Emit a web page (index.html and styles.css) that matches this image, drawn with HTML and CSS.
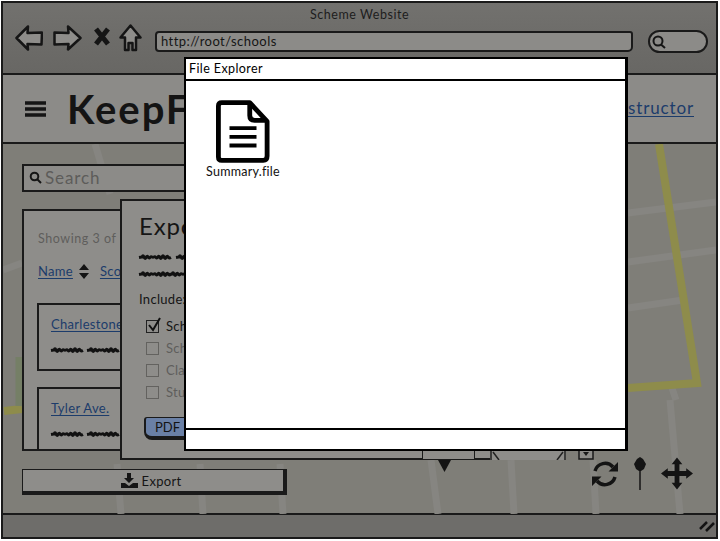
FILE: index.html
```html
<!DOCTYPE html>
<html lang="en">
<head>
<meta charset="utf-8">
<title>Scheme Website</title>
<link rel="stylesheet" href="styles.css">
</head>
<body>
<svg class="defs" width="0" height="0" aria-hidden="true">
  <defs>
    <path id="w" d="M0 4.500 3 4q1-2.500 2 0t2 .5t2-.5t2 .5t2-.5t2 0t2 .5t2-.5t2 .5t2-.5t2 0t2 .5t2-.5 3 .5"/>
    <path id="s" d="M0 4.500 3 4q1-2.500 2 0t2 .5 2-.5"/>
  </defs>
</svg>
<div class="window">
  <div class="chrome">
    <div class="site-title">Scheme Website</div>
    <div class="toolbar">
      <svg class="nav-icon" width="28" height="26" viewBox="0 0 28 26"><path d="M27 7.500 12.500 8 13 1.500 1.500 13 13 24.500 12.500 19 26.500 19.500z"/></svg>
      <svg class="nav-icon" width="29" height="26" viewBox="0 0 29 26"><path d="M1.500 7.500 15.500 8 15 1.500 27.500 13 15 24.500 15.500 19 1.500 19.500z"/></svg>
      <svg class="x-icon" width="18" height="19" viewBox="0 0 18 19"><path d="M3 2 15 17M15 2 3 17"/></svg>
      <svg class="nav-icon home" width="23" height="28" viewBox="0 0 23 28"><path d="M11.500 1.500 21.500 13.500 17 13.500 17 26 13.500 26 13.500 19 9.500 19 9.500 26 6 26 6 13.500 1.500 13.500z"/></svg>
      <div class="url">http://root/schools</div>
      <div class="oval">
        <svg width="16" height="16" viewBox="0 0 16 16"><circle cx="7" cy="7" r="4.500"/><path d="M10 10.500 14 14"/></svg>
      </div>
    </div>
  </div>
  <div class="appbar">
    <div class="brand">
      <svg class="burger" width="21" height="16" viewBox="0 0 21 16"><path d="M0 2h21M0 8h21M0 14h21"/></svg>
      <div class="logo">KeepF</div>
    </div>
    <a class="link instructor">Instructor</a>
  </div>
  <div class="map">
    <svg class="roads" width="716" height="370" viewBox="0 0 716 370">
      <path class="road" d="M0 126 19 119M92 0 107 50M625 69 713 58M625 118 713 106M625 164 680 156M114 320 118 370M197 320 200 370M277 320 280 370M428 316 435 370M508 316 511 370M590 316 593 370M667 256 677 370M669 244 673 256"/>
      <path class="road-y" d="M656 0 694 239 625 244M1 267 19 265"/>
      <path class="green" d="M16 213 16 262"/>
    </svg>

    <div class="searchbox">
      <svg width="13" height="13" viewBox="0 0 13 13"><circle cx="5.500" cy="5.500" r="3.800"/><path d="M8.500 8.500 12 12"/></svg>
      <span>Search</span>
    </div>

    <div class="list-panel">
      <div class="showing">Showing 3 of 3</div>
      <div class="sorts">
        <a class="link">Name</a>
        <svg class="sort" width="10" height="15" viewBox="0 0 10 15"><path d="M5 0 10 6H0zM5 15 0 9H10z"/></svg>
        <a class="link">Score</a>
      </div>
      <div class="card">
        <a class="link">Charlestone</a>
        <svg class="scribble" width="90" height="8" viewBox="0 0 90 8"><use href="#w"/><use href="#w" transform="translate(36 0)"/></svg>
      </div>
      <div class="card">
        <a class="link">Tyler Ave.</a>
        <svg class="scribble" width="90" height="8" viewBox="0 0 90 8"><use href="#w"/><use href="#w" transform="translate(36 0)"/></svg>
      </div>
    </div>

    <div class="export-panel">
      <div class="export-title">Export</div>
      <svg class="scribble" width="60" height="8" viewBox="0 0 60 8"><use href="#w"/><use href="#s" transform="translate(37 0)"/></svg>
      <svg class="scribble" width="60" height="8" viewBox="0 0 60 8"><use href="#w"/><use href="#w" transform="translate(30 0)"/></svg>
      <div class="include">Include:</div>
      <div class="checks">
        <div class="check on"><i class="box"><svg width="16" height="16" viewBox="0 0 16 16"><path d="M3 8 7 13 14 1"/></svg></i>School</div>
        <div class="check"><i class="box"></i>School</div>
        <div class="check"><i class="box"></i>Class</div>
        <div class="check"><i class="box"></i>Student</div>
      </div>
      <div class="pdf">PDF</div>
    </div>

    <div class="behind-bar"></div>
    <svg class="behind-tri" width="13" height="12" viewBox="0 0 13 12"><path d="M0 0H13L6.500 12z"/></svg>
    <svg class="behind-img" width="76" height="9" viewBox="0 0 76 9"><path class="fill" d="M0 0H76V9H0z"/><path d="M1 0V9M75 0V9M3 1 9 9M73 1 67 9"/></svg>
    <svg class="behind-chk" width="16" height="9" viewBox="0 0 16 9"><path d="M1 0V8H15V0"/><path class="solid" d="M5 1H11L8 5z"/></svg>

    <div class="export-btn">
      <svg width="17" height="15" viewBox="0 0 17 15"><path d="M6 0h4v5h3L8 10 3 5h3zM0 10h4l4 3 4-3h5v5H0z"/></svg>
      <span>Export</span>
    </div>

    <div class="map-tools">
      <svg class="refresh" width="28" height="28" viewBox="0 0 28 28"><path class="arc" d="M4 11A10.500 10.500 0 0 1 22 7M24 17A10.500 10.500 0 0 1 6 21"/><path class="solid" d="M27 2V11.500H17.500zM1 26V16.500H10.500z"/></svg>
      <svg class="pin" width="12" height="33" viewBox="0 0 12 33"><path class="solid" d="M6 0 9 2 12 7 10 12 7 14H5L2 12 0 7 3 2z"/><path class="arc" d="M6 12V33"/></svg>
      <svg class="move" width="32" height="33" viewBox="0 0 33 33"><path class="solid" d="M16.500 0 22 7H19V14H26V11L33 16.500 26 22V19H19V26H22L16.500 33 11 26H14V19H7V22L0 16.500 7 11V14H14V7H11z"/></svg>
    </div>
  </div>
  <div class="statusbar">
    <svg width="16" height="14" viewBox="0 0 16 14"><path d="M1 10 8 3M7 12 15 4"/></svg>
  </div>

  <div class="dialog">
    <div class="dialog-title">File Explorer</div>
    <div class="dialog-body">
      <div class="file">
        <svg width="54" height="64" viewBox="0 0 56 66"><path class="doc" d="M6 2.500H35L53 22V58Q53 62.500 49 62.500H6Q2.500 62.500 2.500 59V6Q2.500 2.500 6 2.500Z"/><path class="fold" d="M35 2.500V16Q35 21 40 21H53"/><path class="lines" d="M14 29H42M14 38H42M14 47H42"/></svg>
        <span>Summary.file</span>
      </div>
    </div>
    <div class="dialog-foot"></div>
  </div>
</div>
</body>
</html>
```
FILE: styles.css
```css
* { box-sizing: border-box; }
html, body { margin: 0; height: 100%; }
body { background: #fff; font-family: Lato, "Liberation Sans", sans-serif; color: #141414; overflow: hidden; }
.defs { position: absolute; }
#w, #s { fill: none; stroke: #111; stroke-width: 3; }

.window { position: relative; width: 717px; height: 538px; margin: 1px 0 0 1px; display: flex; flex-direction: column; border: 2px solid #1a1a1a; background: #6e6d6a; overflow: hidden; }
.chrome { height: 72px; flex: none; background: linear-gradient(#72716e, #686764); border-bottom: 2px solid #1a1a1a; padding-top: 4px; }
.site-title { text-align: center; font-size: 12.500px; line-height: 15px; color: #1d1d1d; letter-spacing: .55px; }
.toolbar { display: flex; align-items: center; margin-top: 3px; padding-left: 12px; height: 30px; }
.nav-icon { flex: none; margin: 0 10px 5px 0; fill: #8e8d8a; stroke: #151515; stroke-width: 2.500; stroke-linejoin: round; }
.x-icon { flex: none; margin: 0 8px 8px 1px; fill: none; stroke: #151515; stroke-width: 5; }
.nav-icon.home { margin-right: 13px; }
.url { flex: none; width: 478px; height: 21px; margin: 3px 15px 0 0; border: 2px solid #1a1a1a; border-radius: 4px 3px 5px 4px; background: #8c8b88; font-size: 13px; line-height: 16px; padding-left: 4px; letter-spacing: .45px; color: #151515; }
.oval { flex: none; width: 60px; height: 23px; margin-top: 3px; border: 2px solid #1a1a1a; border-radius: 12px; background: #8c8b88; padding: 2px 0 0 1px; }
.oval svg { fill: none; stroke: #151515; stroke-width: 2; display: block; }

.appbar { height: 69px; flex: none; display: flex; align-items: center; justify-content: space-between; background: #8c8b88; border-bottom: 2px solid #1a1a1a; padding: 0 22px; }
.brand { display: flex; align-items: center; gap: 21px; }
.burger { stroke: #151515; stroke-width: 3.500; flex: none; }
.logo { font-size: 40px; font-weight: 700; line-height: 50px; letter-spacing: 2px; color: #141414; }
.link { color: #1c3c6b; text-decoration: underline; text-underline-offset: 2px; text-decoration-thickness: 1px; }
.instructor { font-size: 17px; letter-spacing: .85px; margin-bottom: 2px; }

.map { position: relative; flex: 1; background: #7f7e78; }
.roads { position: absolute; left: 0; top: 0; fill: none; }
.road { stroke: #868581; stroke-width: 7; }
.road-y { stroke: #8e8c4b; stroke-width: 8; }
.green { stroke: #757f66; stroke-width: 7; }

.searchbox { position: absolute; left: 19px; top: 20px; width: 200px; height: 28px; display: flex; align-items: center; gap: 3px; padding: 0 0 2px 5px; background: #8c8b88; border: 2px solid #1a1a1a; color: #5d5c5a; font-size: 17px; letter-spacing: .9px; }
.searchbox svg { fill: none; stroke: #151515; stroke-width: 2; flex: none; }

.list-panel { position: absolute; left: 19px; top: 65px; width: 180px; height: 242px; background: #8e8d8a; border: 2px solid #1a1a1a; padding: 20px 0 0 13px; overflow: hidden; }
.showing { font-size: 12.500px; line-height: 15px; color: #5f5e5c; letter-spacing: .55px; padding-left: 1px; }
.sorts { display: flex; align-items: center; gap: 6px; margin: 17px 0 0 1px; font-size: 13px; line-height: 17px; letter-spacing: .3px; }
.sorts .sort { flex: none; margin-right: 5px; fill: #141414; }
.card { width: 160px; height: 68px; margin-top: 23px; background: #8e8d8a; border: 2px solid #1a1a1a; padding: 11px 0 0 12px; font-size: 13px; line-height: 17px; letter-spacing: .3px; }
.card .link { display: block; }
.card + .card { margin-top: 16px; }
.scribble { display: block; overflow: visible; }
.card .scribble { margin-top: 13px; }

.export-panel { position: absolute; left: 117px; top: 55px; width: 390px; height: 261px; background: #8e8d8a; border: 2px solid #1a1a1a; padding: 10px 0 0 17px; color: #151515; }
.export-title { font-size: 24px; line-height: 30px; letter-spacing: .8px; }
.export-panel .scribble { margin-top: 12px; }
.export-panel .scribble + .scribble { margin-top: 9px; }
.include { margin-top: 13px; font-size: 13px; line-height: 16px; letter-spacing: .3px; }
.checks { margin: 13px 0 0 7px; display: flex; flex-direction: column; gap: 9px; font-size: 13px; line-height: 13px; color: #5f5e5c; letter-spacing: .3px; }
.check { display: flex; align-items: center; gap: 7px; }
.check.on { color: #151515; }
.box { position: relative; width: 13px; height: 13px; flex: none; border: 1.500px solid #63625f; }
.on .box { border-color: #222; }
.box svg { position: absolute; left: -1px; top: -4px; fill: none; stroke: #111; stroke-width: 2; }
.pdf { width: 90px; height: 23px; margin: 18px 0 0 5px; background: #6a80a6; border: 2px solid #1a1a1a; border-width: 1px 1px 4px 2px; border-radius: 3px 0 0 8px; padding-left: 9px; font-size: 13px; line-height: 18px; color: #141414; }

.behind-bar { position: absolute; left: 419px; top: 304px; width: 53px; height: 12px; background: #8e8d8a; border: 1.500px solid #1a1a1a; border-top: 0; }
.behind-tri { position: absolute; left: 435px; top: 316px; fill: #141414; }
.behind-img { position: absolute; left: 487px; top: 307px; fill: none; stroke: #222; stroke-width: 1.500; }
.behind-img .fill { fill: #8e8d8a; stroke: none; }
.behind-chk { position: absolute; left: 575px; top: 307px; fill: #8e8d8a; stroke: #1a1a1a; stroke-width: 1.500; }
.behind-chk .solid { fill: #1a1a1a; stroke: none; }

.export-btn { position: absolute; left: 19px; top: 325px; width: 265px; height: 26px; display: flex; align-items: center; justify-content: center; gap: 4px; padding-right: 4px; background: #8e8d8a; border: 1.500px solid #1a1a1a; border-right-width: 4px; border-bottom-width: 4px; font-size: 13px; letter-spacing: .3px; color: #151515; }
.export-btn svg { fill: #151515; flex: none; }

.map-tools { position: absolute; left: 588px; top: 313px; display: flex; align-items: center; gap: 15px; }
.map-tools svg { flex: none; display: block; }
.map-tools .solid { fill: #141414; }
.map-tools .arc { fill: none; stroke: #141414; stroke-width: 3.500; }
.pin .arc { stroke-width: 1.500; }

.statusbar { height: 24px; flex: none; display: flex; justify-content: flex-end; align-items: center; padding-right: 1px; background: #6e6d6a; border-top: 2px solid #1a1a1a; }
.statusbar svg { fill: none; stroke: #141414; stroke-width: 2.500; }

.dialog { position: absolute; left: 181px; top: 54px; width: 444px; height: 394px; display: flex; flex-direction: column; background: #fff; border: 2px solid #000; border-right-width: 3px; }
.dialog-title { height: 22px; flex: none; border-bottom: 2px solid #000; padding-left: 3px; font-size: 12.500px; line-height: 20px; letter-spacing: .4px; color: #000; }
.dialog-body { flex: 1; padding: 19px 0 0 19px; }
.dialog-foot { height: 21px; flex: none; border-top: 2px solid #000; }
.file { width: 76px; display: flex; flex-direction: column; align-items: center; font-size: 12.500px; line-height: 14px; letter-spacing: .25px; color: #111; white-space: nowrap; }
.file span { margin-top: 1px; }
.file svg { display: block; fill: none; stroke: #000; }
.doc, .fold { stroke-width: 5; stroke-linejoin: round; }
.lines { stroke-width: 4; }
```
